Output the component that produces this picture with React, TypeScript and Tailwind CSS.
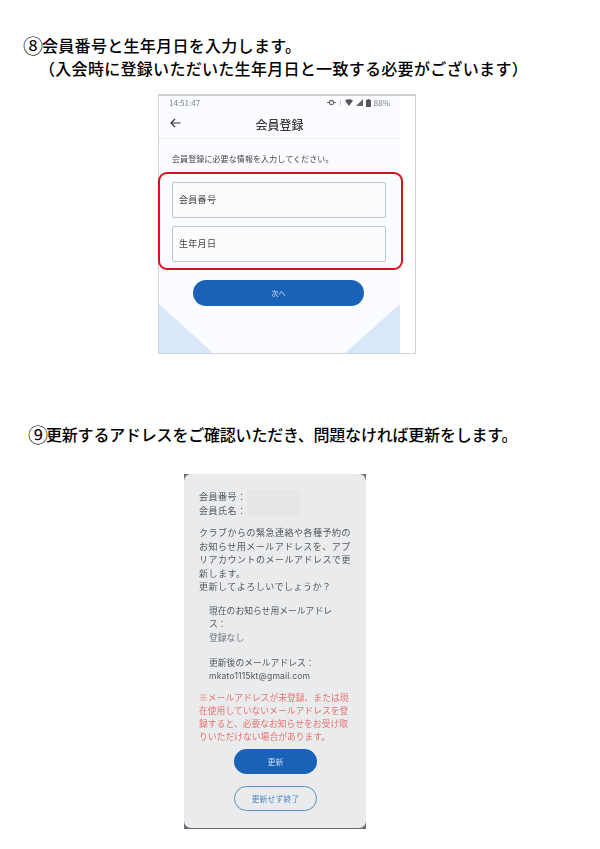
import React from "react";

const jp = '"Noto Sans CJK JP","Liberation Sans",sans-serif';

function StatusIcons() {
  return (
    <div className="flex items-center gap-[3px] text-[8px] text-[#7a7f85]">
      <svg width="9" height="7" viewBox="0 0 9 7"><circle cx="4.5" cy="3.5" r="2.2" fill="none" stroke="#666" strokeWidth="1.2" /><path d="M0 3.5h2M7 3.5h2" stroke="#666" /></svg>
      <span className="w-[1px] h-[5px] bg-[#ccc] mx-[1px]" />
      <svg width="8" height="7" viewBox="0 0 8 7"><path d="M0 1.5 Q4 -1 8 1.5 L4 7Z" fill="#555" /></svg>
      <svg width="7" height="7" viewBox="0 0 7 7"><path d="M0 7 L7 0 V7Z" fill="#666" /></svg>
      <svg width="5" height="8" viewBox="0 0 5 8"><path d="M1.5 0h2v1h1.5v7H0V1h1.5z" fill="#555" /></svg>
      <span>88%</span>
    </div>
  );
}

function Field({ label }: { label: string }) {
  return (
    <div className="h-[36px] border border-[#b5c6cc] rounded-[2px] bg-[#fbfcfd] flex items-center pl-[6px] text-[9px] tracking-[0.3px] text-[#444]">
      {label}
    </div>
  );
}

function Triangle({ side }: { side: "l" | "r" }) {
  return side === "l" ? (
    <svg className="absolute left-0 bottom-0" width="54" height="49" viewBox="0 0 54 49"><path d="M0 0 L54 49 H0Z" fill="#d9e8f9" /></svg>
  ) : (
    <svg className="absolute right-0 bottom-0" width="55" height="49" viewBox="0 0 55 49"><path d="M55 0 L0 49 H55Z" fill="#d9e8f9" /></svg>
  );
}

function PhoneOne() {
  return (
    <div className="relative ml-[158px] mt-[14px] w-[258px] h-[260px] border border-[#cfd2d4] border-t-[2px] bg-white">
      <div className="relative w-[241px] h-full bg-[#fafcff] blur-[0.3px]">
        <div className="h-[13px] pl-[10px] pr-[10px] flex items-center justify-between text-[8px] text-[#7a7f85]">
          <span>14:51:47</span>
          <StatusIcons />
        </div>
        <div className="relative h-[30px] border-b border-[#edf0f3] flex items-center justify-center text-[12px] font-medium leading-none text-[#3a3a3a] pt-[2px]">
          <svg className="absolute left-[11px] top-[9px]" width="11" height="10" viewBox="0 0 11 10" fill="none" stroke="#333" strokeWidth="1.1"><path d="M10.5 5H1M5 1 1 5l4 4" /></svg>
          <span>会員登録</span>
        </div>
        <p className="pl-[13px] mt-[14px] text-[8px] leading-[12px] tracking-[0.1px] text-[#444]">会員登録に必要な情報を入力してください。</p>
        <div className="ml-[13px] mr-[14px] mt-[17px] flex flex-col gap-[8px]">
          <Field label="会員番号" />
          <Field label="生年月日" />
        </div>
        <div className="ml-[34px] mr-[36px] mt-[18px] h-[26px] rounded-full bg-[#1a62b8] flex items-center justify-center text-[7px] text-[#cfe0f3]">次へ</div>
        <Triangle side="l" />
        <Triangle side="r" />
      </div>
      <div className="absolute left-[-1px] top-[76px] w-[245px] h-[98px] border-2 border-[#d9101c] rounded-[9px]" />
    </div>
  );
}

function PhoneTwo() {
  return (
    <div className="ml-[184px] mt-[28px] w-[182px] h-[355px] bg-[#6b6e72]">
      <div className="h-[354px] rounded-[7px] bg-[#e9ebed] pl-[15px] pr-[14px] pt-[16px] text-[9px] leading-[13.5px] text-[#55585b] blur-[0.25px]">
        <div className="relative tracking-[0.5px]">
          <p>会員番号：</p>
          <p>会員氏名：</p>
          <div className="absolute left-[48px] top-[0px] w-[53px] h-[26px] rounded-[2px] bg-[#e4e6e8]" />
        </div>
        <p className="mt-[9px] tracking-[0.5px]">クラブからの緊急連絡や各種予約のお知らせ用メールアドレスを、アプリアカウントのメールアドレスで更新します。<br />更新してよろしいでしょうか？</p>
        <div className="pl-[10px] pr-[14px] mt-[10px] text-[8.8px]">
          <p>現在のお知らせ用メールアドレス：</p>
          <p className="text-[#74777a]">登録なし</p>
          <p className="mt-[12px]">更新後のメールアドレス：</p>
          <p className="font-['Inter',sans-serif] text-[8.5px] tracking-[0.2px]">mkato1115kt@gmail.com</p>
        </div>
        <p className="mt-[8px] text-[8.8px] text-[#e8716f] leading-[13px]">※メールアドレスが未登録、または現在使用していないメールアドレスを登録すると、必要なお知らせをお受け取りいただけない場合があります。</p>
        <div className="mx-[35px] mt-[6px] h-[25px] rounded-full bg-[#1a62b8] flex items-center justify-center text-[8px] text-[#c9dcf2]">更新</div>
        <div className="mx-[35px] mt-[12px] h-[25px] rounded-full border border-[#5b8fc9] flex items-center justify-center text-[8px] text-[#4f86c4]">更新せず終了</div>
      </div>
    </div>
  );
}

export default function App() {
  return (
    <div className="w-[600px] h-[849px] bg-white overflow-hidden" style={{ fontFamily: jp }}>
      <div className="pt-[34px] pl-[23px] text-[16px] leading-[23px] font-medium text-black tracking-[0.3px]">
        <p className="h-[23px]"><span className="inline-block w-[19px] text-[20px] leading-[20px] font-normal tracking-normal align-[-2px]">⑧</span>会員番号と生年月日を入力します。</p>
        <p className="pl-[16px]">（入会時に登録いただいた生年月日と一致する必要がございます）</p>
      </div>
      <PhoneOne />
      <p className="h-[23px] pl-[28px] mt-[69px] text-[16px] leading-[23px] font-medium text-black whitespace-nowrap tracking-[-0.2px]"><span className="inline-block w-[18px] text-[20px] leading-[20px] font-normal tracking-normal align-[-2px]">⑨</span>更新するアドレスをご確認いただき、問題なければ更新をします。</p>
      <PhoneTwo />
    </div>
  );
}
